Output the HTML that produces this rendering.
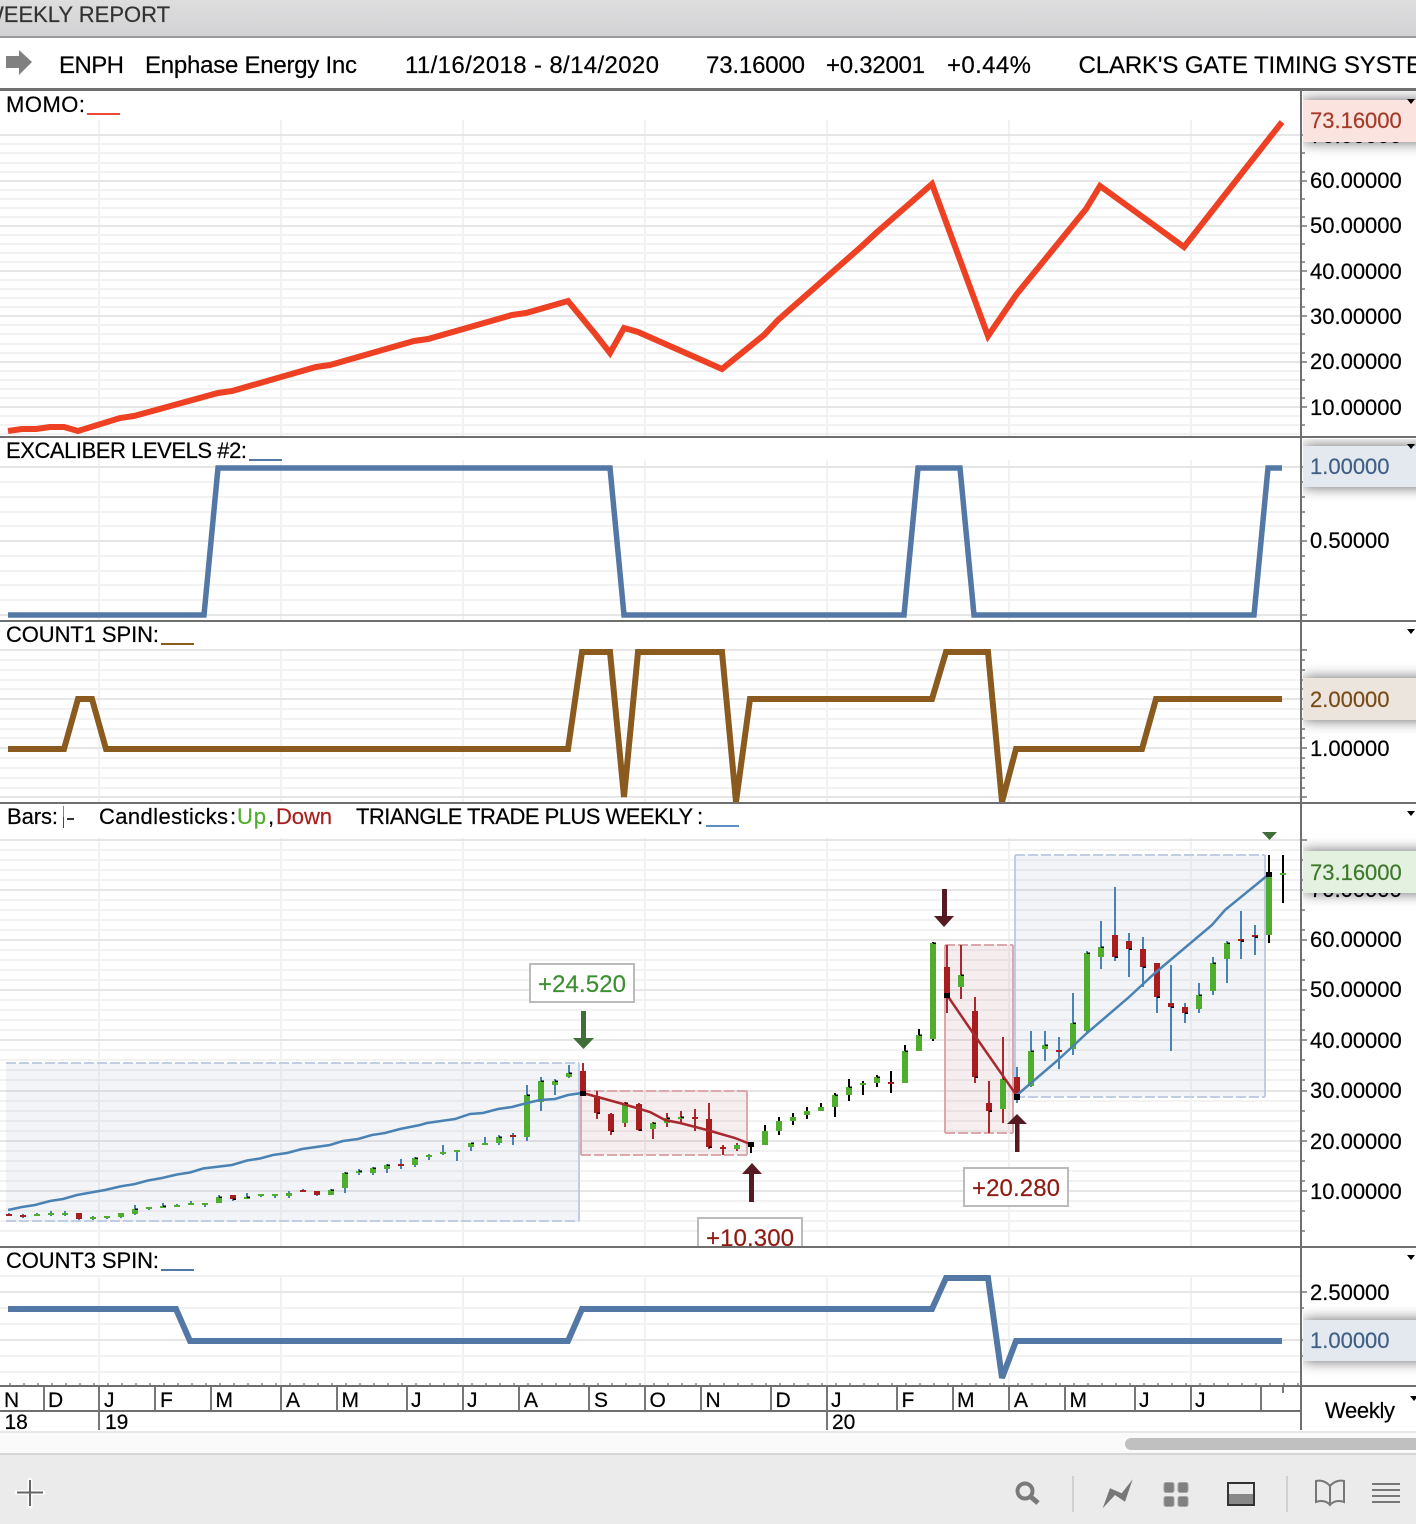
<!DOCTYPE html>
<html><head><meta charset="utf-8"><title>ENPH Weekly Report</title>
<style>
html,body{margin:0;padding:0;background:#fff;width:1416px;height:1524px;overflow:hidden}
svg{display:block;position:absolute;left:0;top:0}
text{font-family:"Liberation Sans",Arial,sans-serif;font-size:22px;fill:#000;stroke:#000;stroke-width:.2}
.h{font-size:24px}
.m{font-size:21px}
.l{font-size:24px}
</style></head><body>
<svg width="1416" height="1524" viewBox="0 0 1416 1524" xmlns="http://www.w3.org/2000/svg">
<defs>
<linearGradient id="tb" x1="0" y1="0" x2="0" y2="1"><stop offset="0" stop-color="#dededf"/><stop offset="1" stop-color="#d2d1d3"/></linearGradient>
<filter id="s" x="-20%" y="-70%" width="140%" height="240%"><feDropShadow dx="0" dy="0" stdDeviation="7" flood-color="#000" flood-opacity=".6"/></filter>
<clipPath id="p1"><rect x="1303" y="91" width="113" height="345"/></clipPath>
<clipPath id="p2"><rect x="1303" y="439" width="113" height="181"/></clipPath>
<clipPath id="p3"><rect x="1303" y="623" width="113" height="179"/></clipPath>
<clipPath id="p4"><rect x="1303" y="805" width="113" height="441"/></clipPath>
<clipPath id="p5"><rect x="1303" y="1249" width="113" height="136"/></clipPath>
<clipPath id="c10"><rect x="690" y="1200" width="120" height="46"/></clipPath>
</defs>

<!-- title -->
<rect width="1416" height="36" fill="url(#tb)"/>
<rect y="36" width="1416" height="2" fill="#9b9b9b"/>
<text x="-17" y="22" style="fill:#333;stroke:#333">WEEKLY REPORT</text>

<!-- header -->
<polygon points="6,56 19,56 19,50 32,62 19,75 19,68 6,68" fill="#808080"/>
<text class="h" x="59" y="73" textLength="65">ENPH</text>
<text class="h" x="145" y="73" textLength="212">Enphase Energy Inc</text>
<text class="h" x="405" y="73" textLength="254">11/16/2018 - 8/14/2020</text>
<text class="h" x="706" y="73" textLength="99">73.16000</text>
<text class="h" x="826" y="73" textLength="99">+0.32001</text>
<text class="h" x="947" y="73" textLength="84">+0.44%</text>
<text class="h" x="1078.500" y="73" style="letter-spacing:-.12px">CLARK'S GATE TIMING SYSTEM</text>

<!-- grid minor -->
<path fill="none" stroke="#f2f2f2" stroke-width="2" shape-rendering="crispEdges" d="M0 144H1301M0 153H1301M0 163H1301M0 172H1301M0 190H1301M0 199H1301M0 208H1301M0 217H1301M0 235H1301M0 244H1301M0 253H1301M0 262H1301M0 280H1301M0 289H1301M0 298H1301M0 307H1301M0 325H1301M0 334H1301M0 344H1301M0 353H1301M0 371H1301M0 380H1301M0 389H1301M0 398H1301M0 416H1301M0 425H1301M0 434H1301
M0 482H1301M0 497H1301M0 512H1301M0 526H1301M0 556H1301M0 571H1301M0 585H1301M0 600H1301
M0 660H1301M0 670H1301M0 680H1301M0 689H1301M0 709H1301M0 719H1301M0 729H1301M0 738H1301M0 758H1301M0 768H1301M0 778H1301M0 788H1301
M0 850H1301M0 860H1301M0 870H1301M0 880H1301M0 900H1301M0 910H1301M0 920H1301M0 930H1301M0 950H1301M0 960H1301M0 970H1301M0 980H1301M0 1000H1301M0 1010H1301M0 1020H1301M0 1030H1301M0 1050H1301M0 1060H1301M0 1070H1301M0 1080H1301M0 1101H1301M0 1111H1301M0 1121H1301M0 1131H1301M0 1151H1301M0 1161H1301M0 1171H1301M0 1181H1301M0 1201H1301M0 1211H1301M0 1221H1301M0 1231H1301
M0 1276H1301M0 1308H1301M0 1324H1301M0 1356H1301M0 1372H1301
M99 120V436M281 120V436M463 120V436M645 120V436M827 120V436M1009 120V436M1191 120V436
M99 460V620M281 460V620M463 460V620M645 460V620M827 460V620M1009 460V620M1191 460V620
M99 650V802M281 650V802M463 650V802M645 650V802M827 650V802M1009 650V802M1191 650V802
M99 838V1246M281 838V1246M463 838V1246M645 838V1246M827 838V1246M1009 838V1246M1191 838V1246
M99 1276V1385M281 1276V1385M463 1276V1385M645 1276V1385M827 1276V1385M1009 1276V1385M1191 1276V1385"/>
<!-- grid major -->
<path fill="none" stroke="#e6e6e6" stroke-width="2" shape-rendering="crispEdges" d="M0 135H1301M0 181H1301M0 226H1301M0 271H1301M0 316H1301M0 362H1301M0 407H1301
M0 467H1301M0 541H1301M0 615H1301
M0 650H1301M0 699H1301M0 748H1301M0 797H1301
M0 840H1301M0 890H1301M0 940H1301M0 990H1301M0 1040H1301M0 1091H1301M0 1141H1301M0 1191H1301
M0 1292H1301M0 1340H1301"/>

<!-- axis ticks -->
<path fill="none" stroke="#777" stroke-width="1.500" d="M1301 135h6M1301 181h6M1301 226h6M1301 271h6M1301 316h6M1301 362h6M1301 407h6M1301 153h4M1301 172h4M1301 199h4M1301 217h4M1301 244h4M1301 262h4M1301 289h4M1301 307h4M1301 334h4M1301 353h4M1301 380h4M1301 398h4M1301 425h4
M1301 467h6M1301 541h6M1301 615h6M1301 482h4M1301 497h4M1301 512h4M1301 526h4M1301 556h4M1301 571h4M1301 585h4M1301 600h4
M1301 650h6M1301 699h6M1301 748h6M1301 797h6M1301 660h4M1301 670h4M1301 680h4M1301 689h4M1301 709h4M1301 719h4M1301 729h4M1301 738h4M1301 758h4M1301 768h4M1301 778h4M1301 788h4
M1301 840h6M1301 890h6M1301 940h6M1301 990h6M1301 1040h6M1301 1091h6M1301 1141h6M1301 1191h6M1301 860h4M1301 880h4M1301 910h4M1301 930h4M1301 960h4M1301 980h4M1301 1010h4M1301 1030h4M1301 1060h4M1301 1080h4M1301 1111h4M1301 1131h4M1301 1161h4M1301 1181h4M1301 1211h4M1301 1231h4
M1301 1292h6M1301 1340h6M1301 1308h3M1301 1356h3"/>

<!-- panel titles -->
<text x="6" y="112" textLength="79">MOMO:</text>
<rect x="87" y="113" width="33" height="2" fill="#ee4a3a"/>
<text x="6" y="458" textLength="241">EXCALIBER LEVELS #2:</text>
<rect x="249" y="459" width="33" height="2" fill="#5378a5"/>
<text x="6" y="642" textLength="153">COUNT1 SPIN:</text>
<rect x="161" y="643" width="33" height="2" fill="#8b5a1f"/>
<text x="7" y="824" textLength="51">Bars:</text>
<rect x="63" y="806" width="1" height="11" fill="#4fae2e"/><rect x="63" y="817" width="1" height="11" fill="#a81e1e"/>
<rect x="67" y="818" width="7" height="2" fill="#333"/>
<text x="99" y="824" textLength="129">Candlesticks</text>
<text x="230" y="824">:</text>
<text x="237" y="824" textLength="29" style="fill:#4fae2e;stroke:#4fae2e">Up</text>
<text x="268" y="824">,</text>
<text x="276" y="824" textLength="56" style="fill:#a81e1e;stroke:#a81e1e">Down</text>
<text x="356" y="824" textLength="337">TRIANGLE TRADE PLUS WEEKLY</text>
<text x="697" y="824">:</text>
<rect x="706" y="825" width="33" height="2" fill="#5b8fc4"/>
<text x="6" y="1268" textLength="153">COUNT3 SPIN:</text>
<rect x="161" y="1269" width="33" height="2" fill="#5378a5"/>

<!-- indicator lines -->
<polyline fill="none" stroke="#ee4023" stroke-width="6" points="8,431 22,429 36,429 50,427 64,427 78,431 120,418 134,416 218,393 232,391 316,367 330,365 414,341 428,339 512,315 526,313 568,301 596,335 610,353 624,328 638,332 722,369 764,335 778,320 862,246 876,233 932,184 988,336 1016,295 1086,209 1100,186 1184,247 1282,122"/>
<polyline fill="none" stroke="#5378a5" stroke-width="5.500" points="8,615 204,615 218,468 610,468 624,615 904,615 918,468 960,468 974,615 1254,615 1268,468 1282,468"/>
<polyline fill="none" stroke="#8b5a1f" stroke-width="6" points="8,749 64,749 78,699 92,699 106,749 568,749 582,652 610,652 624,797 638,652 722,652 736,802 750,699 932,699 946,652 988,652 1002,802 1016,749 1142,749 1156,699 1282,699"/>
<polyline fill="none" stroke="#5378a5" stroke-width="6" points="8,1309 176,1309 190,1341 568,1341 582,1309 932,1309 946,1278 988,1278 1002,1378 1016,1341 1282,1341"/>

<!-- shaded boxes -->
<rect x="6" y="1063" width="573" height="158" fill="#aab2cc" fill-opacity=".15"/>
<path d="M6 1063H579M6 1221H579" fill="none" stroke="#c0cde2" stroke-width="2" stroke-dasharray="10 3"/>
<path d="M579 1063V1221" fill="none" stroke="#c0cde2" stroke-width="2"/>
<rect x="1015" y="855" width="250" height="242" fill="#aab2cc" fill-opacity=".15"/>
<path d="M1015 855H1265M1015 1097H1265" fill="none" stroke="#c0cde2" stroke-width="2" stroke-dasharray="10 3"/>
<path d="M1015 855V1097M1265 855V1097" fill="none" stroke="#c0cde2" stroke-width="2"/>
<rect x="581" y="1091" width="166" height="64" fill="#b06060" fill-opacity=".11"/>
<path d="M581 1091H747M581 1155H747" fill="none" stroke="#dba9ac" stroke-width="2" stroke-dasharray="10 3"/>
<path d="M581 1091V1155M747 1091V1155" fill="none" stroke="#dba9ac" stroke-width="2"/>
<rect x="945" y="945" width="68" height="188" fill="#b06060" fill-opacity=".11"/>
<path d="M945 945H1013M945 1133H1013" fill="none" stroke="#dba9ac" stroke-width="2" stroke-dasharray="10 3"/>
<path d="M945 945V1133M1013 945V1133" fill="none" stroke="#dba9ac" stroke-width="2"/>

<!-- wicks -->
<g fill="none" stroke-width="2" shape-rendering="crispEdges">
<path stroke="#4a82b4" d="M9 1213V1216M23 1214V1218M37 1213V1216M51 1211V1216M65 1211V1216M79 1213V1220M93 1216V1220M107 1216V1219M121 1213V1218M135 1205V1215M149 1207V1210M163 1203V1208M177 1204V1207M191 1201V1205M205 1203V1207M219 1195V1203M233 1195V1201M247 1193V1199M261 1194V1197M275 1194V1198M289 1191V1198M303 1189V1192M317 1191V1196M331 1189V1195M345 1172V1193M359 1169V1175M373 1167V1175M387 1164V1173M401 1159V1169M415 1157V1167M429 1154V1160M443 1145V1155M457 1150V1161M471 1143V1151M485 1137V1145M499 1135V1145M513 1133V1145M527 1085V1141M541 1077V1111M555 1079V1095M569 1065V1078
M1017 1067V1103M1031 1031V1087M1045 1031V1061M1059 1037V1069M1073 993V1055M1087 951V1033M1101 921V969M1115 887V961M1129 933V977M1143 937V987M1157 963V1013M1171 965V1051M1185 1003V1023M1199 983V1013M1213 957V995M1227 941V983M1241 911V959M1255 925V955"/>
<path stroke="#a8292f" d="M583 1063V1096M597 1091V1119M611 1113V1135M625 1102V1127M639 1103V1131M653 1122V1139M667 1113V1127M681 1111V1124M695 1109V1131M709 1103V1149M723 1145V1155M737 1143V1151
M947 945V1013M961 945V999M975 997V1083M989 1081V1133M1003 1037V1123"/>
<path stroke="#000" d="M751 1142V1153M765 1125V1131M779 1117V1135M793 1113V1125M807 1107V1119M821 1103V1111M835 1093V1117M849 1079V1101M863 1081V1095M877 1075V1087M891 1071V1093M905 1045V1051M919 1029V1035M933 942V1041M1269 855V943M1283 855V903"/>
</g>
<!-- bodies -->
<g fill="none" stroke-width="6" shape-rendering="crispEdges">
<path stroke="#4fae2e" d="M37 1214V1216M51 1213V1215M65 1213V1215M93 1217V1219M107 1216V1218M121 1213V1217M135 1209V1214M149 1207V1209M163 1206V1208M177 1205V1207M191 1203V1205M205 1203V1205M219 1197V1203M247 1197V1199M261 1194V1196M275 1194V1196M289 1193V1196M331 1190V1195M345 1173V1188M359 1171V1173M373 1168V1173M387 1165V1169M415 1158V1165M429 1155V1157M443 1152V1154M457 1150V1152M471 1143V1147M485 1143V1145M499 1137V1143M527 1095V1137M541 1081V1102M555 1081V1085M569 1073V1077
M625 1103V1123M653 1123V1129M667 1118V1123M681 1117V1119M737 1145V1149M765 1131V1145M779 1121V1131M793 1117V1121M807 1111V1115M821 1107V1111M835 1095V1107M849 1087V1095M863 1083V1085M877 1077V1083M905 1051V1083M919 1035V1051M933 943V1039M961 975V987M1003 1079V1109M1031 1051V1086M1045 1045V1049M1073 1023V1049M1087 953V1031M1101 947V957M1199 995V1009M1213 963V991M1227 943V959M1269 875V935M1283 873V875"/>
<path stroke="#a81e1e" d="M9 1214V1216M23 1215V1217M79 1213V1219M233 1195V1199M303 1190V1192M317 1191V1195M401 1164V1166M513 1135V1137M583 1071V1092M597 1096V1113M611 1114V1131M639 1104V1130M695 1117V1119M709 1119V1147M723 1147V1149M891 1082V1084M947 967V993M975 1011V1077M989 1103V1111M1017 1077V1093M1059 1050V1052M1115 935V957M1129 941V949M1143 949V967M1157 963V997M1171 1003V1007M1185 1007V1013M1241 939V941M1255 935V937"/>
</g>
<!-- close ticks -->
<path fill="none" stroke="#000" stroke-width="1.500" shape-rendering="crispEdges" d="M135 1209h3M163 1206h3M219 1197h3M233 1199h3M247 1197h3M331 1190h3M345 1173h3M359 1171h3M373 1168h3M387 1165h3M415 1158h3M471 1143h3M499 1137h3M527 1095h3M541 1081h3M555 1081h3M569 1073h3M597 1113h3M611 1131h3M625 1103h3M639 1130h3M653 1123h3M667 1118h3M681 1117h3M709 1147h3M835 1095h3M849 1087h3M877 1077h3M905 1051h3M919 1035h3M933 943h3M961 975h3M975 1077h3M989 1111h3M1003 1079h3M1031 1051h3M1045 1045h3M1073 1023h3M1087 953h3M1101 947h3M1115 957h3M1129 949h3M1143 967h3M1157 997h3M1171 1007h3M1185 1013h3M1199 995h3M1213 963h3M1227 943h3M1241 941h3M1255 937h3"/>

<!-- trend lines -->
<g fill="none" stroke-width="2.500">
<polyline stroke="#4a82b4" points="8,1210 22,1207 35,1205 50,1201 63,1199 77,1195 105,1190 120,1186.500 135,1184 148,1180.500 162,1178 177,1174.500 190,1172.500 203,1168.500 232,1165 247,1160.500 260,1158.500 273,1155 287,1153 302,1149 330,1145 343,1141 358,1139 372,1135 385,1133 400,1129 420,1125 427,1123 455,1119 470,1114 483,1113 498,1109 512,1107 527,1103 540,1100 555,1099 568,1095 582,1093"/>
<polyline stroke="#a8292f" points="583,1093 623,1104 650,1112 665,1120 680,1123 707,1130 735,1138 750,1144"/>
<polyline stroke="#a8292f" points="947,995 973,1033 1017,1096"/>
<polyline stroke="#4a82b4" points="1017,1095 1058,1060 1087,1033 1128,998 1142,985 1155,973 1212,925 1225,910 1268,875"/>
</g>
<!-- pivots -->
<g fill="#000" shape-rendering="crispEdges">
<rect x="580" y="1091" width="6" height="5"/><rect x="748" y="1142" width="6" height="5"/><rect x="944" y="993" width="6" height="5"/><rect x="1014" y="1094" width="6" height="6"/><rect x="1266" y="872" width="6" height="5"/>
</g>

<!-- arrows -->
<rect x="581" y="1011" width="5" height="28" fill="#3f6e38"/>
<polygon points="573,1038 594,1038 583.500,1049" fill="#3f6e38"/>
<rect x="749" y="1173" width="5" height="29" fill="#551a22"/>
<polygon points="742,1174 762,1174 752,1163" fill="#551a22"/>
<rect x="942" y="889" width="5" height="28" fill="#551a22"/>
<polygon points="934,916 954,916 944,927" fill="#551a22"/>
<rect x="1015" y="1123" width="4.500" height="29" fill="#551a22"/>
<polygon points="1007,1124 1027,1124 1017,1114" fill="#551a22"/>
<polygon points="1262,832 1277,832 1269.500,840" fill="#3f6e38"/>

<!-- callouts -->
<rect x="530" y="964" width="104" height="38" fill="#fff" stroke="#bbb" stroke-width="2"/>
<text class="l" x="538" y="992" textLength="88" style="fill:#3e8e35;stroke:#3e8e35">+24.520</text>
<rect x="964" y="1168" width="104" height="38" fill="#fff" stroke="#bbb" stroke-width="2"/>
<text class="l" x="972" y="1196" textLength="88" style="fill:#8f1c12;stroke:#8f1c12">+20.280</text>
<g clip-path="url(#c10)">
<rect x="698" y="1218" width="104" height="40" fill="#fff" stroke="#bbb" stroke-width="2"/>
<text class="l" x="706" y="1246" textLength="88" style="fill:#8f1c12;stroke:#8f1c12">+10.300</text>
</g>

<!-- panel rules -->
<g fill="#6f6f6f" shape-rendering="crispEdges">
<rect y="88" width="1416" height="3"/>
<rect y="436" width="1416" height="2"/>
<rect y="620" width="1416" height="2"/>
<rect y="802" width="1416" height="2"/>
<rect y="1246" width="1416" height="2"/>
<rect y="1385" width="1416" height="2"/>
<rect y="1410" width="1301" height="2"/>
<rect x="1300" y="91" width="2" height="1339"/>
</g>

<!-- axis labels -->
<text x="1310" y="143">70.00000</text>
<text x="1310" y="188">60.00000</text>
<text x="1310" y="233">50.00000</text>
<text x="1310" y="279">40.00000</text>
<text x="1310" y="324">30.00000</text>
<text x="1310" y="369">20.00000</text>
<text x="1310" y="415">10.00000</text>
<text x="1310" y="548">0.50000</text>
<text x="1310" y="756">1.00000</text>
<text x="1310" y="897">70.00000</text>
<text x="1310" y="947">60.00000</text>
<text x="1310" y="997">50.00000</text>
<text x="1310" y="1048">40.00000</text>
<text x="1310" y="1098">30.00000</text>
<text x="1310" y="1149">20.00000</text>
<text x="1310" y="1199">10.00000</text>
<text x="1310" y="1300">2.50000</text>

<!-- price flags -->
<g clip-path="url(#p1)"><rect x="1303" y="100" width="130" height="42" fill="#fbe3df" filter="url(#s)"/></g>
<text x="1310" y="128" style="fill:#a53a27;stroke:#a53a27">73.16000</text>
<g clip-path="url(#p2)"><rect x="1303" y="446" width="130" height="41" fill="#e4e9f0" filter="url(#s)"/></g>
<text x="1310" y="474" style="fill:#3f5f86;stroke:#3f5f86">1.00000</text>
<g clip-path="url(#p3)"><rect x="1303" y="678" width="130" height="42" fill="#ece5dd" filter="url(#s)"/></g>
<text x="1310" y="707" style="fill:#7a4a16;stroke:#7a4a16">2.00000</text>
<g clip-path="url(#p4)"><rect x="1303" y="851" width="130" height="42" fill="#e5f1e0" filter="url(#s)"/></g>
<text x="1310" y="880" style="fill:#3c7a2a;stroke:#3c7a2a">73.16000</text>
<g clip-path="url(#p5)"><rect x="1303" y="1320" width="130" height="41" fill="#e4e9f0" filter="url(#s)"/></g>
<text x="1310" y="1348" style="fill:#3f5f86;stroke:#3f5f86">1.00000</text>

<!-- dropdown triangles -->
<g fill="#000">
<polygon points="1407,99 1415,99 1411,104"/>
<polygon points="1407,444 1415,444 1411,449"/>
<polygon points="1407,629 1415,629 1411,634"/>
<polygon points="1407,811 1415,811 1411,816"/>
<polygon points="1407,1255 1415,1255 1411,1260"/>
<polygon points="1410,1396 1418,1396 1414,1401"/>
</g>

<!-- time axis -->
<path fill="none" stroke="#777" stroke-width="2" shape-rendering="crispEdges" d="M44 1387V1410M99 1387V1430M155 1387V1410M211 1387V1410M281 1387V1410M337 1387V1410M407 1387V1410M463 1387V1410M519 1387V1410M589 1387V1410M645 1387V1410M701 1387V1410M771 1387V1410M827 1387V1430M897 1387V1410M953 1387V1410M1009 1387V1410M1065 1387V1410M1135 1387V1410M1191 1387V1410M1261 1387V1410M1283 1387V1393"/>
<path fill="none" stroke="#888" stroke-width="1.500" stroke-dasharray="2 12" d="M9 1384H1300"/>
<text class="m" x="4" y="1407">N</text><text class="m" x="48" y="1407">D</text><text class="m" x="104" y="1407">J</text><text class="m" x="160" y="1407">F</text><text class="m" x="215.500" y="1407">M</text><text class="m" x="286" y="1407">A</text><text class="m" x="341.500" y="1407">M</text><text class="m" x="411" y="1407">J</text><text class="m" x="467" y="1407">J</text><text class="m" x="524" y="1407">A</text><text class="m" x="594" y="1407">S</text><text class="m" x="649.500" y="1407">O</text><text class="m" x="705.500" y="1407">N</text><text class="m" x="775.500" y="1407">D</text><text class="m" x="831" y="1407">J</text><text class="m" x="901.500" y="1407">F</text><text class="m" x="957" y="1407">M</text><text class="m" x="1014" y="1407">A</text><text class="m" x="1069.500" y="1407">M</text><text class="m" x="1139" y="1407">J</text><text class="m" x="1195" y="1407">J</text>
<text class="m" x="4.500" y="1429">18</text><text class="m" x="105" y="1429">19</text><text class="m" x="832" y="1429">20</text>
<text x="1325" y="1418" textLength="70">Weekly</text>

<!-- scrollbar -->
<rect y="1431" width="1416" height="2" fill="#e8e8e8"/>
<rect y="1433" width="1416" height="20" fill="#fafafa"/>
<rect x="1125" y="1438" width="300" height="12" rx="6" fill="#c0c0c0"/>
<rect y="1453" width="1416" height="2" fill="#d6d6d6"/>

<!-- toolbar -->
<rect y="1455" width="1416" height="69" fill="#ebebeb"/>
<path d="M30 1480V1506M17 1492.500H43" fill="none" stroke="#fff" stroke-width="5" stroke-linecap="round" opacity=".8"/>
<path d="M30 1480V1506M17 1492.500H43" fill="none" stroke="#666" stroke-width="2"/>
<circle cx="1025" cy="1491" r="7.500" fill="none" stroke="#7a7a7a" stroke-width="4"/>
<path d="M1031 1497L1038 1503" stroke="#7a7a7a" stroke-width="5" fill="none"/>
<rect x="1072" y="1476" width="2" height="36" fill="#d0d0d0"/>
<rect x="1286" y="1476" width="2" height="36" fill="#d0d0d0"/>
<polygon points="1102.700,1508.300 1110,1488.300 1121.700,1493.300 1132.700,1479.300 1125,1501.700 1115,1495" fill="#777"/>
<g fill="#808080" stroke="#a5a5a5" stroke-width="1">
<rect x="1164" y="1482.500" width="10" height="10" rx="2"/><rect x="1178" y="1482.500" width="10" height="10" rx="2"/>
<rect x="1164" y="1496.500" width="10" height="10" rx="2"/><rect x="1178" y="1496.500" width="10" height="10" rx="2"/>
</g>
<rect x="1228" y="1483" width="26" height="22" fill="#ebebeb"/>
<rect x="1228" y="1494" width="26" height="11" fill="#888"/>
<rect x="1228" y="1483" width="26" height="22" fill="none" stroke="#333" stroke-width="2"/>
<path d="M1330 1486C1326 1481 1320 1480 1316 1481V1502C1321 1500 1327 1501 1330 1505C1333 1501 1339 1500 1344 1502V1481C1340 1480 1334 1481 1330 1486V1503" fill="none" stroke="#777" stroke-width="2"/>
<path d="M1372 1484H1400M1372 1490H1400M1372 1496H1400M1372 1502H1400" fill="none" stroke="#777" stroke-width="2"/>
</svg>
</body></html>
